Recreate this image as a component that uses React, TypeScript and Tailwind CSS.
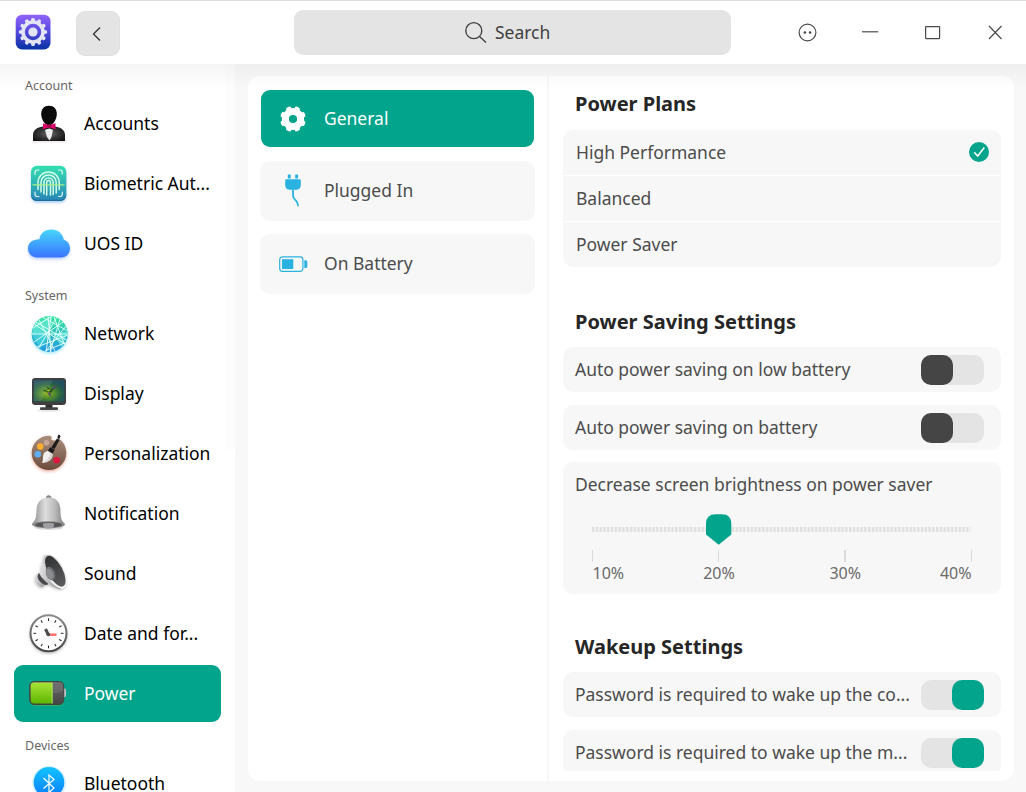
import type { ReactNode } from "react";

function IconBox({ children }: { children: ReactNode }) {
  return (
    <svg viewBox="-24 -24 48 48" className="h-12 w-12 shrink-0 overflow-visible">
      {children}
    </svg>
  );
}

function Gradient({ id, from, to, diagonal = false }: { id: string; from: string; to: string; diagonal?: boolean }) {
  return (
    <linearGradient id={id} x1="0" y1="0" x2={diagonal ? "1" : "0"} y2={diagonal ? "0.4" : "1"}>
      <stop offset="0" stopColor={from} />
      <stop offset="1" stopColor={to} />
    </linearGradient>
  );
}

function AccountsIcon() {
  return (
    <IconBox>
      <defs>
        <radialGradient id="suit" cx="0.5" cy="0.5" r="0.6">
          <stop offset="0" stopColor="#6a6a6a" />
          <stop offset="0.5" stopColor="#383838" />
          <stop offset="1" stopColor="#141414" />
        </radialGradient>
      </defs>
      <rect x="-15" y="14" width="32" height="4.5" rx="1" fill="#e9cfd6" opacity="0.5" />
      <path d="M-15 17V11C-15 6-11 3.5-5 2.5L1 4L7 2.500C13 3.500 17 6 17 11V17Z" fill="url(#suit)" />
      <path d="M-3 4L1.500 17L5.500 4Z" fill="#111" />
      <path d="M-3 6Q1.500 3 5 6L3.500 13L1.500 16.500L-1 13Z" fill="#eeeeee" />
      <path d="M1 -18.200C6 -18.200 8.800 -14.800 8.800 -10C8.800 -5 5.500 1.200 1 1.200C-3.500 1.200 -6.800 -5 -6.800 -10C-6.800 -14.800 -4 -18.200 1 -18.200Z" fill="#0b0b0b" />
      <path d="M-5 -.8L1 1.300L7.500 -.8V5.200L1 3.400L-5 5.200Z" fill="#dc006b" />
      <rect x="-.7" y="0.600" width="4" height="3.500" rx="1" fill="#a90050" />
    </IconBox>
  );
}

function BiometricIcon() {
  return (
    <IconBox>
      <defs>
        <Gradient id="bio" from="#33e0b0" to="#2a85b8" />
        <filter id="bioShade" x="-20%" y="-20%" width="140%" height="150%">
          <feDropShadow dx="0" dy="1.800" stdDeviation="1.200" floodColor="#5b9ff0" floodOpacity="0.5" />
        </filter>
      </defs>
      <rect x="-17" y="-18.300" width="35.300" height="35.300" rx="6" fill="url(#bio)" filter="url(#bioShade)" />
      <path d="M-17 11V11.500A6 6 0 0 0-11 17H12.300A6 6 0 0 0 18.300 11V10A6 6 0 0 1 12.300 15.700H-11A6 6 0 0 1-17 10Z" fill="#206c96" />
      <path
        d="M-13 -9.500V-11.500Q-13 -14 -10.500 -14H-9M10.500 -14H12Q14.300 -14 14.300 -11.500V-10M-13 8V10Q-13 12.500 -10.500 12.500H-9M10.500 12.500H12Q14.300 12.500 14.300 10V8"
        fill="none"
        stroke="#fff"
        strokeLinecap="round"
        strokeWidth="1.2"
        opacity=".85"
      />
      <g fill="none" stroke="#d5fbe4" strokeWidth="1.500" strokeLinecap="round">
        <path d="M-10 5.500V-1.500A10.600 10.600 0 0 1 11.200 -1.500V5.500" />
        <path d="M-7 8V-1.500A7.600 7.600 0 0 1 8.200 -1.500V9" />
        <path d="M-4 10V-1.500A4.600 4.600 0 0 1 5.200 -1.500V10.500" />
        <path d="M-1.300 11V-1.500A1.900 1.900 0 0 1 2.500 -1.500V11" />
      </g>
      <path d="M-15.500 0.800H16.500" stroke="#a6ef8a" strokeWidth="1.200" />
    </IconBox>
  );
}

function CloudIcon() {
  return (
    <IconBox>
      <defs>
        <Gradient id="cloud" from="#46d6fb" to="#3a74ff" />
        <filter id="cloudShade" x="-20%" y="-20%" width="140%" height="150%">
          <feDropShadow dx="0" dy="1.800" stdDeviation="1.500" floodColor="#5385ff" floodOpacity="0.4" />
        </filter>
      </defs>
      <path
        filter="url(#cloudShade)"
        fill="url(#cloud)"
        d="M-11 13.500C-16 13.500-20 9.500-20 4.500C-20 -1-16 -4.800-8.500 -4.800C-7.800 -10.500-3.500 -14.600 3.300 -14.600C10 -14.600 14.500 -10.500 15.800 -4.300C19.500 -3.300 22 0 22 4.500C22 9.500 18 13.500 13 13.500Z"
      />
    </IconBox>
  );
}

function NetworkIcon() {
  return (
    <IconBox>
      <defs>
        <Gradient id="net" from="#36e69b" to="#2399e6" />
        <clipPath id="globe">
          <circle cx="1.700" cy="0" r="18" />
        </clipPath>
        <filter id="netShade" x="-20%" y="-20%" width="140%" height="150%">
          <feDropShadow dx="0" dy="1.800" stdDeviation="1.500" floodColor="#4ed8ea" floodOpacity="0.45" />
        </filter>
      </defs>
      <circle cx="1.700" cy="0" r="18" fill="url(#net)" filter="url(#netShade)" />
      <g clipPath="url(#globe)">
        <path d="M-14 -10L4 -18L3 0L-16 0ZM3 0L20 -3L14 14L0 -8Z" fill="#6feee0" opacity=".6" />
        <path d="M-16 0H3L-8 15Z" fill="#4fdce6" opacity=".6" />
        <path
          d="M-16 0H20M-14 -10L17 10M-6 -17L20 -3M9 -17L-10 15M0 -18L3 18M-12 -12L20 7M12 -15L2 18M3 -17L-2 18M-9 -14L7 17M-14 8L15 -12M-11 13L20 1M-15 -6L4 -18M6 -17L17 12M18 -8L-2 17M-3 17L19 8"
          fill="none"
          stroke="#eafffb"
          strokeWidth="0.900"
        />
      </g>
    </IconBox>
  );
}

function DisplayIcon() {
  return (
    <IconBox>
      <defs>
        <radialGradient id="screen" cx="0.450" cy="0.620" r="0.620">
          <stop offset="0" stopColor="#93b81f" />
          <stop offset="0.350" stopColor="#558f2b" />
          <stop offset="0.700" stopColor="#286242" />
          <stop offset="1" stopColor="#214f5e" />
        </radialGradient>
      </defs>
      <ellipse cx="1" cy="16.300" rx="12" ry="1.800" fill="#000" opacity=".08" />
      <path d="M-2.500 10H4.500V14H-2.500Z" fill="#2e2e2e" />
      <rect x="-8" y="13.300" width="18" height="2.600" rx=".8" fill="#454545" />
      <rect x="-16" y="-16" width="34" height="27" rx="3.200" fill="#3f3f41" />
      <rect x="-14.500" y="-14" width="31" height="21.500" rx="1.200" fill="url(#screen)" />
      <path d="M-14 -13.500H5L-7 7H-14Z" fill="#fff" opacity=".1" />
      <path d="M-1.500 -8L2.500 -4.500L9.500 -9L5 -4L3 -1L1 -2L-6 -3L0 -5Z" fill="#23521d" />
      <path d="M3 -5.500L10 -10L6 -5ZM-1 -2L2.500 -1L3 3.500L1 1Z" fill="#59436f" />
      <path d="M-2.500 -4L2.500 -4.500L1 -2.500Z" fill="#b4d62b" />
    </IconBox>
  );
}

function PersonalizationIcon() {
  return (
    <IconBox>
      <defs>
        <Gradient id="palette" from="#aa8f7d" to="#6b4c3d" />
        <filter id="paletteShade" x="-20%" y="-20%" width="140%" height="150%">
          <feDropShadow dx="0" dy="1.500" stdDeviation="1.500" floodColor="#d35b3c" floodOpacity="0.500" />
        </filter>
      </defs>
      <path
        filter="url(#paletteShade)"
        fill="url(#palette)"
        d="M1 -18.300C4 -18.300 4 -16 3 -14.500C5 -13 8 -13 11 -15.200C15.500 -12 18.300 -7 18.300 -1C18.300 8.600 10.600 16 1 16C-8.600 16-16.300 8.600-16.300 -1C-16.300 -10.600-8.600 -18.300 1 -18.300Z"
      />
      <circle cx="-1.500" cy="-11.300" r="2.800" fill="#c8a79b" />
      <circle cx="-7.700" cy="-7.500" r="3.200" fill="#ffae2d" />
      <circle cx="-10.200" cy="0.300" r="3.300" fill="#60aef3" />
      <circle cx="8.700" cy="6.300" r="3.300" fill="#df1640" />
      <path d="M3.300 -6.500L9 -15.500L11.500 -14L6.500 -5Z" fill="#1b1b1b" />
      <path d="M9.300 -16L10.300 -19.300Q12.300 -19.700 12.300 -17.700L11.300 -14.800Z" fill="#1b1b1b" />
      <path d="M2.300 -6.800L6.700 -4.200L4.700 -.6L0 -3.400Z" fill="#17191b" />
      <path d="M-.3 -3L4.500 0C5 4.500 1.500 8.200-6 9C-4.500 6.500-5.500 4-4.800 1.300C-4.200 -1.300-2.500 -2.800 -.3 -3Z" fill="#f3f1ef" />
      <path d="M4.500 0C5 4.500 1.500 8.200-6 9C-.5 6.500 1.800 3.500 2.500 -1.200Z" fill="#d8d4d1" />
    </IconBox>
  );
}

function NotificationIcon() {
  return (
    <IconBox>
      <defs>
        <linearGradient id="bell" x1="0" x2="1">
          <stop offset="0" stopColor="#8b8b8b" />
          <stop offset="0.400" stopColor="#dedede" />
          <stop offset="0.700" stopColor="#bababa" />
          <stop offset="1" stopColor="#808080" />
        </linearGradient>
      </defs>
      <ellipse cx="1" cy="13.500" rx="14" ry="2.500" fill="#000" opacity=".15" />
      <circle cx="0.700" cy="-16" r="2.700" fill="#858585" />
      <path
        d="M.7 -16.500C8 -16.500 12.300 -12 12.500 -4C12.600 3 13 6.500 16.500 9.300V11H-15.700V9.300C-12.500 6.500-11.700 3-11.500 -4C-11.300 -12-6.500 -16.500 .7 -16.500Z"
        fill="url(#bell)"
      />
      <ellipse cx="0.500" cy="10.800" rx="16.300" ry="3.500" fill="#8e8e8e" />
      <ellipse cx="0.500" cy="10.800" rx="13.500" ry="2.800" fill="#555" />
      <path d="M-5 9.500Q.5 8 6 9.500V12Q5 14.600 .5 14.600Q-4 14.600-5 12Z" fill="#9c9ea2" />
    </IconBox>
  );
}

function SoundIcon() {
  return (
    <IconBox>
      <defs>
        <Gradient id="magnet" from="#efeff1" to="#9b9ba0" diagonal />
        <Gradient id="cone" from="#303133" to="#5c5c5e" />
        <Gradient id="rim" from="#c4c4c4" to="#fafafa" />
        <filter id="soundShade" x="-20%" y="-20%" width="140%" height="150%">
          <feDropShadow dx="0" dy="1.200" stdDeviation="1" floodColor="#000" floodOpacity="0.250" />
        </filter>
      </defs>
      <g filter="url(#soundShade)">
        <path d="M-11 -.5Q-16 5-12 9.500Q-9 14-4.500 12.500L-1 8L-6 -1Z" fill="url(#magnet)" />
        <path d="M-9.500 -.5Q-12 4-7.500 8Q-4 12 0 10.500L1 7L-5 -2Z" fill="#47484b" />
        <path d="M-4 -19C-6.500 -12-8.700 -5-8.500 0C-4 8 5 14 12 15L16 12L0 -18Z" fill="url(#magnet)" />
        <ellipse cx="6.700" cy="-2.400" rx="8.700" ry="18.600" transform="rotate(-28 6.700 -2.400)" fill="url(#rim)" />
      </g>
      <ellipse cx="7.300" cy="-2.800" rx="7.300" ry="17" transform="rotate(-28 7.300 -2.800)" fill="url(#cone)" />
      <ellipse cx="2.500" cy="-.5" rx="4.400" ry="7" transform="rotate(-22 2.500 -0.500)" fill="#6f7175" />
      <ellipse cx="1.700" cy="0" rx="3.200" ry="5.500" transform="rotate(-22 1.700 0)" fill="#8b8d91" />
    </IconBox>
  );
}

const clockMarks = [0, 30, 60, 90, 120, 150, 180, 210, 240, 270, 300, 330];

function ClockIcon() {
  return (
    <IconBox>
      <defs>
        <Gradient id="clockRim" from="#8b8b8b" to="#464646" />
        <filter id="clockShade" x="-20%" y="-20%" width="140%" height="150%">
          <feDropShadow dx="0" dy="1.500" stdDeviation="1.200" floodColor="#000" floodOpacity="0.250" />
        </filter>
      </defs>
      <circle cx="0.500" cy="-.7" r="18" fill="#fff" stroke="url(#clockRim)" strokeWidth="2" filter="url(#clockShade)" />
      <g stroke="#222" strokeWidth="1">
        {clockMarks.map((angle) => (
          <path key={angle} d="M.5 -15.700V-13" transform={`rotate(${angle} 0.500 -0.700)`} />
        ))}
      </g>
      <path d="M0 .7H8.500" stroke="#ff6a69" strokeWidth="2.400" />
      <path d="M.5 1L-2.500 -5" stroke="#4b4b4b" strokeWidth="3" />
      <circle cx="0.300" cy="0.500" r="1.800" fill="#4b4b4b" />
    </IconBox>
  );
}

function PowerIcon() {
  return (
    <IconBox>
      <defs>
        <Gradient id="charge" from="#a8e438" to="#5eb500" />
        <Gradient id="cell" from="#686868" to="#454545" />
      </defs>
      <rect x="-18" y="-10" width="34" height="22" rx="5" fill="#73c41a" opacity=".35" />
      <rect x="14" y="-5.500" width="4" height="8.500" rx="1.500" fill="#c1c1c1" />
      <rect x="-18.300" y="-12.500" width="34" height="23" rx="4.500" fill="url(#cell)" stroke="#3f4540" strokeWidth="1" />
      <path d="M4 -11.500V9.500H-14A3.300 3.300 0 0 1-17.300 6.200V-8.200A3.300 3.300 0 0 1-14 -11.500Z" fill="url(#charge)" />
      <path d="M4.200 -11.500V9.500" stroke="#b1e865" strokeWidth="1" />
      <path d="M5 -11.500H12.500Q15 -11 15 -8V-3Q10 0 5 -1Z" fill="#777" opacity=".5" />
    </IconBox>
  );
}

function BluetoothIcon() {
  return (
    <IconBox>
      <defs>
        <Gradient id="blue" from="#13c3ff" to="#087cff" />
      </defs>
      <circle cx="1" cy="-1" r="17" fill="#b9e6ff" opacity=".55" />
      <circle cx="1" cy="-1.700" r="15.300" fill="url(#blue)" />
      <path d="M-4.500 -6L6 4L1 8.500V-9L6 -4.500L-4.500 4.500" fill="none" stroke="#fff" strokeWidth="1.200" />
    </IconBox>
  );
}

function AppLogo() {
  return (
    <svg viewBox="0 0 36 36" className="h-9 w-9 shrink-0">
      <defs>
        <linearGradient id="logo" x1="0" y1="0" x2="0" y2="1">
          <stop offset="0" stopColor="#9163fb" />
          <stop offset="0.500" stopColor="#5348dd" />
          <stop offset="1" stopColor="#0531a0" />
        </linearGradient>
      </defs>
      <rect x="0.700" y="0.700" width="34.800" height="34.800" rx="6.500" fill="url(#logo)" />
      <g fill="#e3e5f5">
        {clockMarks.map((angle) => (
          <rect key={angle} x="16.200" y="3.900" width="3.600" height="5" rx="1.400" transform={`rotate(${angle} 18 18)`} />
        ))}
        <circle cx="18" cy="18" r="4.600" />
      </g>
      <circle cx="18" cy="18" r="10" fill="none" stroke="#e3e5f5" strokeWidth="3.600" />
    </svg>
  );
}

function GeneralIcon() {
  return (
    <svg viewBox="-16 -16 32 32" className="h-8 w-8 shrink-0" fill="#fff">
      {[22.5, 67.5, 112.5, 157.5, 202.5, 247.5, 292.5, 337.5].map((angle) => (
        <rect key={angle} x="-2.700" y="-12.900" width="5.400" height="7" rx="1.800" transform={`rotate(${angle})`} />
      ))}
      <circle r="7.600" fill="none" stroke="#fff" strokeWidth="7" />
    </svg>
  );
}

function PlugIcon() {
  return (
    <svg viewBox="-16 -16 32 32" className="h-8 w-8 shrink-0 overflow-visible" fill="#29b2df">
      <rect x="-5.200" y="-16.400" width="2.900" height="4" rx=".5" />
      <rect x="2.200" y="-16.400" width="2.900" height="4" rx=".5" />
      <path d="M-7.800 -10.500Q-7.800 -11.700-6.600 -11.700H6.600Q7.800 -11.700 7.800 -10.500V-6Q7.800 -1.200 3 -1.200H-3Q-7.800 -1.200-7.800 -6Z" />
      <path d="M0 -1.500V4.500C0 9.500 5.200 8.500 5.200 15.300" fill="none" stroke="#29b2df" strokeWidth="1.800" />
    </svg>
  );
}

function BatteryIcon() {
  return (
    <svg viewBox="-16 -16 32 32" className="h-8 w-8 shrink-0" fill="#29b2df">
      <rect x="-13.300" y="-7.100" width="23.200" height="14.400" rx="2.800" fill="none" stroke="#29b2df" strokeWidth="1.200" />
      <rect x="-11" y="-4.800" width="11.300" height="9.800" />
      <path d="M11.300 -3.800H12.700Q14.300 -3.800 14.300 -2.200V2.400Q14.300 4 12.700 4H11.300Z" />
    </svg>
  );
}

function NavItem({ icon, label, active = false }: { icon: ReactNode; label: string; active?: boolean }) {
  return (
    <div className="flex h-[60px] shrink-0 items-center px-[14px]">
      <div
        className={
          active
            ? "-mt-px flex h-[57px] w-[207px] items-center gap-3 rounded-[9px] bg-[#02a48b] pt-px pl-[10px] text-white"
            : "flex h-[57px] w-[207px] items-center gap-3 pl-[10px] text-black"
        }
      >
        {icon}
        <span className="pb-[2px] leading-6 whitespace-nowrap">{label}</span>
      </div>
    </div>
  );
}

function NavHeading({ children }: { children: string }) {
  return <h2 className="flex h-[30px] shrink-0 items-end pl-[25px] text-[12.500px] leading-[16px] font-normal text-[#666]">{children}</h2>;
}

function Switch({ on = false }: { on?: boolean }) {
  return (
    <div className={on ? "flex h-[30px] w-[63px] shrink-0 justify-end rounded-[10px] bg-[#e4e4e4]" : "flex h-[30px] w-[63px] shrink-0 rounded-[10px] bg-[#e4e4e4]"}>
      <div className={on ? "h-[30px] w-8 rounded-[10px] bg-[#02a48b]" : "h-[30px] w-8 rounded-[10px] bg-[#454545]"} />
    </div>
  );
}

function SettingRow({ label, on }: { label: string; on?: boolean }) {
  return (
    <div className="flex h-[45px] shrink-0 items-center justify-between rounded-[10px] bg-[#f7f7f7] pr-[17px] pl-3">
      <span className="whitespace-nowrap">{label}</span>
      <Switch on={on} />
    </div>
  );
}

function Section({ title, children }: { title: string; children: ReactNode }) {
  return (
    <section className="flex shrink-0 flex-col">
      <h3 className="pl-3 text-[20px] leading-7 font-bold text-[#262626]">{title}</h3>
      {children}
    </section>
  );
}

function BrightnessCard() {
  return (
    <div className="mt-3 flex h-[132px] shrink-0 flex-col rounded-[10px] bg-[#f7f7f7] pt-[9px] pl-3">
      <span className="leading-[26px]">Decrease screen brightness on power saver</span>
      <svg viewBox="0 0 402 56" className="mt-4 h-14 w-[402px]">
        <defs>
          <pattern id="dashes" width="3.780" height="5" x="17" y="14" patternUnits="userSpaceOnUse">
            <rect width="2.400" height="5" fill="#dfdfdf" />
          </pattern>
        </defs>
        <rect x="17" y="14" width="378.500" height="5" fill="url(#dashes)" />
        <path d="M17.500 37V49M143.500 37V49M396.500 37V49" stroke="#dadada" />
        <path d="M270 37V49" stroke="#dadada" strokeWidth="2" />
        <path d="M131 11Q131 1.300 140.500 1.300H147Q156.300 1.300 156.300 11V21.500L143.700 31.800L131 21.500Z" fill="#02a48b" />
      </svg>
      <div className="mt-[-8px] ml-[17.500px] flex w-[379px] text-[16px] leading-6 text-[#6a6a6a]">
        <span className="w-[63.500px]">10%</span>
        <span className="w-[126px] text-center">20%</span>
        <span className="w-[126.500px] text-center">30%</span>
        <span className="w-[63px] text-right">40%</span>
      </div>
    </div>
  );
}

function TitleBar() {
  return (
    <header className="flex h-16 shrink-0 border-t border-[#dcdcdc] bg-white">
      <div className="flex w-[294px] items-start pt-[10px] pl-[15px]">
        <div className="pt-[3px]">
          <AppLogo />
        </div>
        <button className="ml-[25px] flex h-[45px] w-[44px] items-center justify-center rounded-[9px] border border-[#e0e0e0] bg-[#e4e4e4] pr-[2px]">
          <svg viewBox="0 0 16 16" className="h-4 w-4" fill="none" stroke="#333" strokeWidth="1.300">
            <path d="M11 1.500L4.500 8L11 14.500" />
          </svg>
        </button>
      </div>
      <div className="mt-[9px] flex h-[45px] w-[437px] items-center gap-[8px] rounded-[9px] bg-[#e4e4e4] pl-[170px] text-[#3f3f3f]">
        <svg viewBox="0 0 24 24" className="h-6 w-6" fill="none" stroke="#3c3c3c" strokeWidth="1.300">
          <circle cx="9.800" cy="9.700" r="8" />
          <path d="M15.500 15.500L22 21.500" />
        </svg>
        <span className="-ml-[1px]">Search</span>
      </div>
      <svg viewBox="0 0 295 63" className="h-[63px] w-[295px]" fill="none" stroke="#4b4b4b" strokeWidth="1.200">
        <circle cx="76.500" cy="31.500" r="8.400" />
        <circle cx="73.900" cy="31.500" r="1.300" fill="#444" stroke="none" />
        <circle cx="79.100" cy="31.500" r="1.300" fill="#444" stroke="none" />
        <path d="M131 30.800H147.300" />
        <rect x="194.600" y="25.600" width="14" height="12" rx=".5" />
        <path d="M258 25L270.500 38M270.500 25L258 38" />
      </svg>
    </header>
  );
}

function Sidebar() {
  return (
    <nav className="relative flex w-[235px] shrink-0 flex-col overflow-hidden bg-white">
      <NavHeading>Account</NavHeading>
      <NavItem icon={<AccountsIcon />} label="Accounts" />
      <NavItem icon={<BiometricIcon />} label="Biometric Aut..." />
      <NavItem icon={<CloudIcon />} label="UOS ID" />
      <NavHeading>System</NavHeading>
      <NavItem icon={<NetworkIcon />} label="Network" />
      <NavItem icon={<DisplayIcon />} label="Display" />
      <NavItem icon={<PersonalizationIcon />} label="Personalization" />
      <NavItem icon={<NotificationIcon />} label="Notification" />
      <NavItem icon={<SoundIcon />} label="Sound" />
      <NavItem icon={<ClockIcon />} label="Date and for..." />
      <NavItem icon={<PowerIcon />} label="Power" active />
      <NavHeading>Devices</NavHeading>
      <NavItem icon={<BluetoothIcon />} label="Bluetooth" />
      <div className="absolute top-0 right-0 h-[386px] w-[10px] rounded-b bg-[#fdfdfd]" />
    </nav>
  );
}

function PowerPlans() {
  return (
    <div className="mt-3 flex flex-col gap-px overflow-hidden rounded-[10px]">
      <div className="flex h-[45px] items-center justify-between bg-[#f7f7f7] pr-3 pl-[13px]">
        <span>High Performance</span>
        <svg viewBox="0 0 20 20" className="mb-px h-5 w-5">
          <circle cx="10" cy="10" r="10" fill="#02a48b" />
          <path d="M5.200 10.300L8.700 14L15.300 5.500" fill="none" stroke="#fff" strokeWidth="1.500" />
        </svg>
      </div>
      <div className="flex h-[45px] items-center bg-[#f7f7f7] pl-[13px]">Balanced</div>
      <div className="flex h-[45px] items-center bg-[#f7f7f7] pl-[13px]">Power Saver</div>
    </div>
  );
}

export default function App() {
  return (
    <div className="flex h-[792px] w-[1026px] flex-col overflow-hidden bg-[#f8f8f8] font-['Noto_Sans',sans-serif] text-[17.480px] text-[#4c4c4c]">
      <TitleBar />
      <div className="relative flex min-h-0 flex-1">
        <Sidebar />
        <main className="mt-3 mb-[11px] ml-[12.500px] flex w-[766.500px] overflow-hidden rounded-[12px] bg-white">
          <div className="flex w-[301.500px] shrink-0 flex-col border-r-2 border-[#f7f7f7] px-[12.500px]">
            <div className="mx-px mt-[14px] flex h-[57px] items-center gap-[15px] rounded-[9px] bg-[#02a48b] pl-4 text-white">
              <GeneralIcon />
              <span>General</span>
            </div>
            <div className="mt-[14px] flex h-[60px] items-center gap-[15px] rounded-[10px] bg-[#f7f7f7] pl-[17px]">
              <PlugIcon />
              <span className="pb-[2px] leading-6">Plugged In</span>
            </div>
            <div className="mt-[13px] flex h-[60px] items-center gap-[15px] rounded-[10px] bg-[#f7f7f7] pl-[17px]">
              <BatteryIcon />
              <span className="pb-[2px] leading-6">On Battery</span>
            </div>
          </div>
          <div className="mb-[10px] flex flex-1 flex-col overflow-hidden pt-[14px] pr-[13px] pl-[14px]">
            <Section title="Power Plans">
              <PowerPlans />
            </Section>
            <div className="h-[41px] shrink-0" />
            <Section title="Power Saving Settings">
              <div className="mt-[11px] flex flex-col gap-[13px]">
                <SettingRow label="Auto power saving on low battery" />
                <SettingRow label="Auto power saving on battery" />
              </div>
              <BrightnessCard />
            </Section>
            <div className="h-[39px] shrink-0" />
            <Section title="Wakeup Settings">
              <div className="mt-[11px] flex flex-col gap-[13px]">
                <SettingRow label="Password is required to wake up the co..." on />
                <SettingRow label="Password is required to wake up the m..." on />
              </div>
            </Section>
          </div>
        </main>
        <div className="pointer-events-none absolute inset-x-0 top-0 h-6 bg-gradient-to-b from-black/4 to-transparent" />
      </div>
    </div>
  );
}
